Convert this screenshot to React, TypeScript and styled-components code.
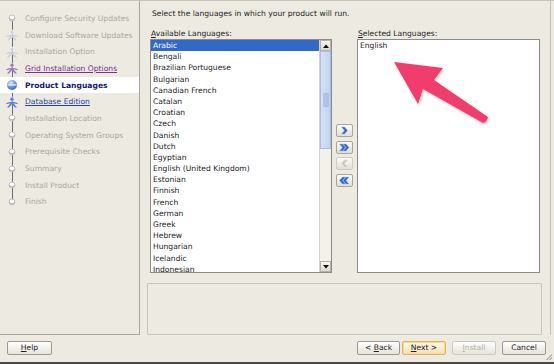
import React from "react";
import styled, { createGlobalStyle, css } from "styled-components";

const Global = createGlobalStyle`
  html, body { margin: 0; padding: 0; background: #edeae2; }
  body { font-family: "DejaVu Sans", "Liberation Sans", sans-serif; }
  * { box-sizing: border-box; }
`;

const Window = styled.div`
  position: relative;
  width: 554px;
  height: 364px;
  background: #edeae2;
  display: flex;
  flex-direction: column;
  border-top: 1px solid #c9c5bb;
  border-bottom: 2px solid #4d4c48;
  overflow: hidden;
  font-size: 7.6px;
  color: #222;
`;

const Body = styled.div`
  display: flex;
  height: 334px;
`;

const Sidebar = styled.nav`
  position: relative;
  width: 140px;
  height: 334px;
  border-right: 1px solid #a9a69c;
  border-bottom: 1px solid #a9a69c;
  padding-top: 9px;
  display: flex;
  flex-direction: column;
`;

const TimelineLine = styled.div`
  position: absolute;
  left: 11.5px;
  top: 18px;
  height: 184px;
  width: 1px;
  background: #6c6b78;
`;

type StepState = "done" | "visited" | "current" | "todo";

const StepRow = styled.div<{ $state: StepState }>`
  position: relative;
  height: 16.7px;
  display: flex;
  align-items: center;
  padding-left: 25px;
  white-space: nowrap;
  ${(p) => p.$state === "current" && css`background: #ffffff;`}
`;

const StepLabel = styled.span<{ $state: StepState; $tone?: string }>`
  color: #aaa8a0;
  ${(p) =>
    p.$state === "visited" &&
    css`
      color: ${p.$tone || "#2b3fa0"};
      text-decoration: underline;
    `}
  ${(p) =>
    p.$state === "current" &&
    css`
      color: #18186e;
      font-weight: bold;
    `}
`;

const NodeSlot = styled.span`
  position: absolute;
  left: 5px;
  top: 50%;
  width: 14px;
  height: 14px;
  margin-top: -7px;
  display: flex;
  align-items: center;
  justify-content: center;
`;

const StepIcon: React.FC<{ kind: string; color?: string }> = ({ kind, color }) => {
  if (kind === "current") {
    return (
      <svg width="12" height="12" viewBox="0 0 12 12">
        <defs>
          <radialGradient id="sph" cx="0.4" cy="0.3" r="0.8">
            <stop offset="0" stopColor="#dbe9ff" />
            <stop offset="0.5" stopColor="#6a9be6" />
            <stop offset="1" stopColor="#2a56b0" />
          </radialGradient>
        </defs>
        <circle cx="6" cy="6" r="5" fill="url(#sph)" />
        <rect x="1.5" y="5.2" width="9" height="1.4" fill="#ffffff" opacity="0.7" />
      </svg>
    );
  }
  if (kind === "figure") {
    const c = color || "#c9c9d2";
    return (
      <svg width="14" height="12" viewBox="0 0 14 12">
        <circle cx="7" cy="3.2" r="2.1" fill={c} stroke="#ffffff" strokeWidth="0.6" />
        <path d="M0.5 7.5 Q7 4 13.5 7.5 L11.5 8 Q7 6.3 2.5 8 Z" fill={c} />
        <path d="M2 11.5 L7 5.5 L12 11.5 L10 11.5 L7 8.3 L4 11.5 Z" fill={c} />
      </svg>
    );
  }
  return (
    <svg width="10" height="10" viewBox="0 0 10 10">
      <circle cx="5" cy="5" r="3" fill="#ffffff" stroke="#b4b3bb" strokeWidth="0.8" />
      <path d="M2.3 5.6 Q5 8.4 7.7 5.6" fill="none" stroke="#9b9aa6" strokeWidth="0.9" />
    </svg>
  );
};

const steps: { label: string; state: StepState; icon: string; color?: string; tone?: string }[] = [
  { label: "Configure Security Updates", state: "done", icon: "dot" },
  { label: "Download Software Updates", state: "done", icon: "figure", color: "#cfcfd8" },
  { label: "Installation Option", state: "done", icon: "figure", color: "#cfcfd8" },
  { label: "Grid Installation Options", state: "visited", icon: "figure", color: "#a07ab8", tone: "#7a2f8c" },
  { label: "Product Languages", state: "current", icon: "current" },
  { label: "Database Edition", state: "visited", icon: "figure", color: "#5b7fd0", tone: "#2b3fa0" },
  { label: "Installation Location", state: "todo", icon: "dot" },
  { label: "Operating System Groups", state: "todo", icon: "dot" },
  { label: "Prerequisite Checks", state: "todo", icon: "dot" },
  { label: "Summary", state: "todo", icon: "dot" },
  { label: "Install Product", state: "todo", icon: "dot" },
  { label: "Finish", state: "todo", icon: "dot" },
];

const Main = styled.main`
  flex: 1;
  display: flex;
  flex-direction: column;
  padding: 8px 0 0 7px;
  border-right: 1px solid #c4c0b6;
  margin-right: 3px;
`;

const Heading = styled.div`
  height: 10px;
  line-height: 10px;
  padding-left: 5px;
  white-space: nowrap;
`;

const Columns = styled.div`
  display: flex;
  margin-top: 10px;
  padding-left: 3px;
  gap: 4px;
`;

const ListColumn = styled.div<{ $w: number }>`
  width: ${(p) => p.$w}px;
  display: flex;
  flex-direction: column;
`;

const FieldLabel = styled.div`
  height: 10px;
  line-height: 10px;
  padding-left: 1px;
  white-space: nowrap;
  u { text-decoration: underline; }
`;

const ListBox = styled.div`
  height: 234px;
  border: 1px solid #8b8a86;
  background: #ffffff;
  display: flex;
  overflow: hidden;
`;

const ListItems = styled.div`
  flex: 1;
  overflow: hidden;
`;

const ListItem = styled.div<{ $selected?: boolean }>`
  height: 11.2px;
  line-height: 11.2px;
  padding-left: 2px;
  white-space: nowrap;
  color: #222;
  ${(p) =>
    p.$selected &&
    css`
      background: #3169c6;
      color: #ffffff;
    `}
`;

const ScrollBar = styled.div`
  width: 12px;
  display: flex;
  flex-direction: column;
  background: #f3f1ea;
  border-left: 1px solid #d4d1c8;
`;

const ScrollArrow = styled.div`
  height: 11px;
  display: flex;
  align-items: center;
  justify-content: center;
  background: linear-gradient(#f7f6f1, #dcdbd2);
  border: 1px solid #b3b1a8;
`;

const ScrollThumb = styled.div`
  height: 98px;
  background: linear-gradient(90deg, #d5e1f7, #c2d3f2);
  border: 1px solid #a9bde3;
  display: flex;
  align-items: center;
  justify-content: center;
`;

const Grip = styled.div`
  width: 6px;
  height: 14px;
  background-image: radial-gradient(circle, #8fa7d6 0.6px, transparent 0.8px);
  background-size: 2px 2px;
`;

const ButtonColumn = styled.div`
  width: 17px;
  display: flex;
  flex-direction: column;
  gap: 3.5px;
  padding-top: 95px;
`;

const MoveButton = styled.button<{ $disabled?: boolean }>`
  width: 17px;
  height: 13px;
  padding: 0;
  border: 1px solid ${(p) => (p.$disabled ? "#cfccc3" : "#a8a69c")};
  border-radius: 2px;
  background: linear-gradient(#fbfaf6, #e2dfd5);
  display: flex;
  align-items: center;
  justify-content: center;
`;

const Chevrons: React.FC<{ dir: "r" | "l"; count: 1 | 2; disabled?: boolean }> = ({ dir, count, disabled }) => {
  const fill = disabled ? "#c8c6c0" : "#2d66d3";
  const hi = disabled ? "#e4e2dc" : "#8fb4f2";
  const one = (x: number) =>
    dir === "r"
      ? `M${x} 1 L${x + 3} 1 L${x + 6} 4.5 L${x + 3} 8 L${x} 8 L${x + 3} 4.5 Z`
      : `M${x + 6} 1 L${x + 3} 1 L${x} 4.5 L${x + 3} 8 L${x + 6} 8 L${x + 3} 4.5 Z`;
  const xs = count === 1 ? [2.5] : [0.5, 4];
  return (
    <svg width="11" height="9" viewBox="0 0 11 9">
      {xs.map((x) => (
        <g key={x}>
          <path d={one(x)} fill={fill} />
          <path d={one(x)} fill="none" stroke={hi} strokeWidth="0.5" />
        </g>
      ))}
    </svg>
  );
};

const MessagePanel = styled.div`
  margin-top: 10px;
  width: 395px;
  height: 53px;
  border: 1px solid #c8c5bb;
  border-radius: 1px;
`;

const BottomBar = styled.footer`
  flex: 1;
  display: flex;
  align-items: center;
  padding: 0 8px 1px 7px;
`;

const DialogButton = styled.button<{ $default?: boolean; $disabled?: boolean; $w?: number; $gap?: number }>`
  width: ${(p) => p.$w || 44}px;
  height: 14px;
  margin-left: ${(p) => p.$gap || 0}px;
  padding: 0;
  font-family: "DejaVu Sans", "Liberation Sans", sans-serif;
  font-size: 7.6px;
  color: ${(p) => (p.$disabled ? "#b3b0a7" : "#222")};
  border: 1px solid ${(p) => (p.$disabled ? "#cbc8bf" : p.$default ? "#e0b35a" : "#9a988f")};
  border-radius: 2px;
  background: ${(p) =>
    p.$default ? "linear-gradient(#fff8e6, #f2e2b8)" : "linear-gradient(#ffffff, #e6e3da)"};
  box-shadow: ${(p) => (p.$default ? "inset 0 0 0 1px #f7d995" : "none")};
  line-height: 12px;
  u { text-decoration: underline; }
`;

const Spacer = styled.div`
  flex: 1;
`;

const ButtonGroup = styled.div`
  display: flex;
  align-items: center;
`;

const ResizeGrip = styled.div`
  position: absolute;
  right: 2px;
  bottom: 2px;
  width: 6px;
  height: 6px;
  background: linear-gradient(135deg, transparent 50%, #b9b6ad 50%, #b9b6ad 60%, transparent 60%, transparent 75%, #b9b6ad 75%, #b9b6ad 85%, transparent 85%);
`;

const ArrowOverlay = styled.svg`
  position: absolute;
  left: 0;
  top: 0;
  pointer-events: none;
`;

const languages = [
  "Arabic",
  "Bengali",
  "Brazilian Portuguese",
  "Bulgarian",
  "Canadian French",
  "Catalan",
  "Croatian",
  "Czech",
  "Danish",
  "Dutch",
  "Egyptian",
  "English (United Kingdom)",
  "Estonian",
  "Finnish",
  "French",
  "German",
  "Greek",
  "Hebrew",
  "Hungarian",
  "Icelandic",
  "Indonesian",
];

export default function App() {
  return (
    <>
      <Global />
      <Window>
        <Body>
          <Sidebar>
            <TimelineLine />
            {steps.map((s) => (
              <StepRow key={s.label} $state={s.state}>
                <NodeSlot>
                  <StepIcon kind={s.icon} color={s.color} />
                </NodeSlot>
                <StepLabel $state={s.state} $tone={s.tone}>
                  {s.label}
                </StepLabel>
              </StepRow>
            ))}
          </Sidebar>
          <Main>
            <Heading>Select the languages in which your product will run.</Heading>
            <Columns>
              <ListColumn $w={182}>
                <FieldLabel>
                  <u>A</u>vailable Languages:
                </FieldLabel>
                <ListBox>
                  <ListItems>
                    {languages.map((l, i) => (
                      <ListItem key={l} $selected={i === 0}>
                        {l}
                      </ListItem>
                    ))}
                  </ListItems>
                  <ScrollBar>
                    <ScrollArrow>
                      <svg width="6" height="4" viewBox="0 0 6 4">
                        <path d="M0 4 L3 0.5 L6 4 Z" fill="#111" />
                      </svg>
                    </ScrollArrow>
                    <ScrollThumb>
                      <Grip />
                    </ScrollThumb>
                    <Spacer />
                    <ScrollArrow>
                      <svg width="6" height="4" viewBox="0 0 6 4">
                        <path d="M0 0 L3 3.5 L6 0 Z" fill="#111" />
                      </svg>
                    </ScrollArrow>
                  </ScrollBar>
                </ListBox>
              </ListColumn>
              <ButtonColumn>
                <MoveButton>
                  <Chevrons dir="r" count={1} />
                </MoveButton>
                <MoveButton>
                  <Chevrons dir="r" count={2} />
                </MoveButton>
                <MoveButton $disabled>
                  <Chevrons dir="l" count={1} disabled />
                </MoveButton>
                <MoveButton>
                  <Chevrons dir="l" count={2} />
                </MoveButton>
              </ButtonColumn>
              <ListColumn $w={183}>
                <FieldLabel>
                  <u>S</u>elected Languages:
                </FieldLabel>
                <ListBox>
                  <ListItems>
                    <ListItem>English</ListItem>
                  </ListItems>
                </ListBox>
              </ListColumn>
            </Columns>
            <MessagePanel />
          </Main>
        </Body>
        <BottomBar>
          <DialogButton $w={45}>
            <u>H</u>elp
          </DialogButton>
          <Spacer />
          <ButtonGroup>
            <DialogButton $w={43}>
              &lt; <u>B</u>ack
            </DialogButton>
            <DialogButton $w={44} $default $gap={2}>
              <u>N</u>ext &gt;
            </DialogButton>
            <DialogButton $w={44} $disabled $gap={6}>
              <u>I</u>nstall
            </DialogButton>
            <DialogButton $w={44} $gap={6}>
              Cancel
            </DialogButton>
          </ButtonGroup>
        </BottomBar>
        <ResizeGrip />
        <ArrowOverlay width="554" height="364" viewBox="0 0 554 364">
          <defs>
            <filter id="sh" x="-20%" y="-20%" width="140%" height="140%">
              <feDropShadow dx="1" dy="1.5" stdDeviation="1.2" floodColor="#000" floodOpacity="0.25" />
            </filter>
          </defs>
          <path
            d="M394 61 L443 67 L434 79 L488 116 Q487 121 483 122 L423 88 L418 103 Z"
            fill="#f03c6e"
            filter="url(#sh)"
          />
        </ArrowOverlay>
      </Window>
    </>
  );
}
